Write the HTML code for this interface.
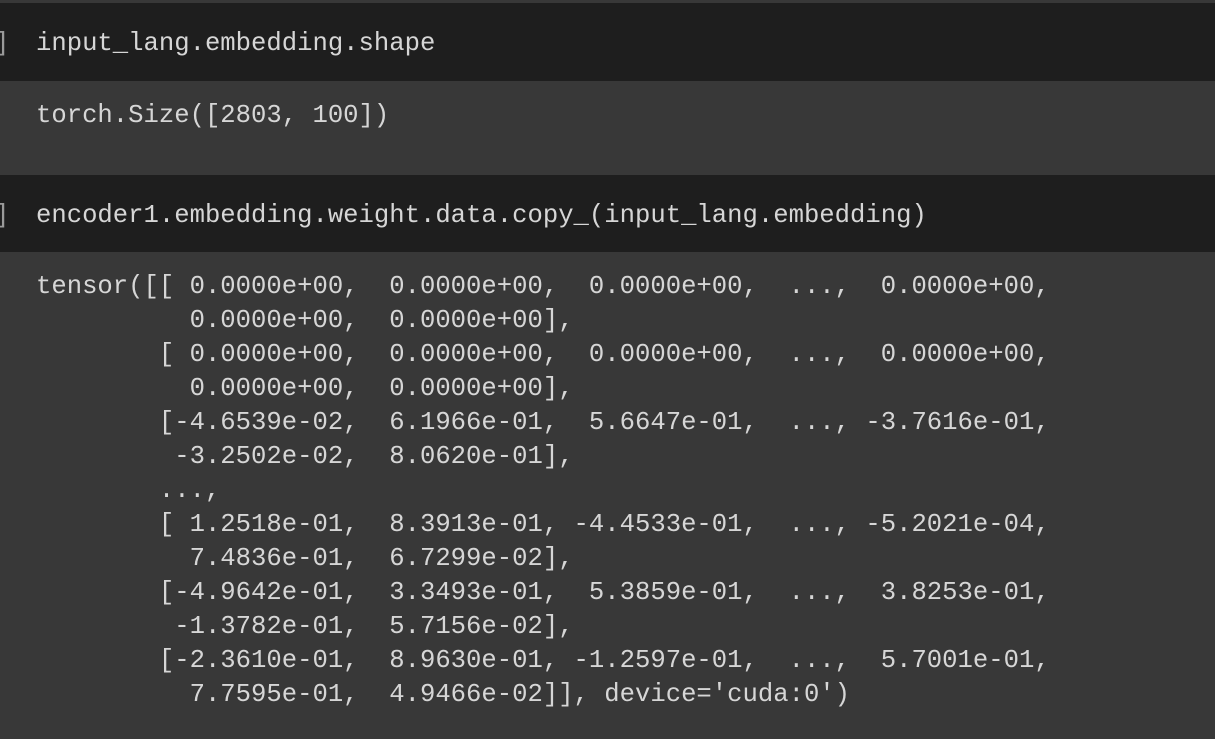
<!DOCTYPE html>
<html><head><style>
body{margin:0;width:1215px;height:739px;background:#383838;overflow:hidden;font-family:"Liberation Mono",monospace;font-size:25.6px;color:#d6d6d6;position:relative}
.band{position:absolute;left:0;width:1215px;background:#1e1e1e}
pre{margin:0;font:inherit;position:absolute;left:36px;line-height:34px;white-space:pre}
.br{position:absolute;color:#9a9a9a}
</style></head><body>
<div class="band" style="top:3px;height:78px"></div>
<div class="band" style="top:175px;height:77px"></div>
<pre style="top:27px">input_lang.embedding.shape</pre>
<pre class="br" style="top:27px;left:-6px">]</pre>
<pre style="top:99px">torch.Size([2803, 100])</pre>
<pre style="top:199px">encoder1.embedding.weight.data.copy_(input_lang.embedding)</pre>
<pre class="br" style="top:199px;left:-6px">]</pre>
<pre style="top:270px">tensor([[ 0.0000e+00,  0.0000e+00,  0.0000e+00,  ...,  0.0000e+00,
          0.0000e+00,  0.0000e+00],
        [ 0.0000e+00,  0.0000e+00,  0.0000e+00,  ...,  0.0000e+00,
          0.0000e+00,  0.0000e+00],
        [-4.6539e-02,  6.1966e-01,  5.6647e-01,  ..., -3.7616e-01,
         -3.2502e-02,  8.0620e-01],
        ...,
        [ 1.2518e-01,  8.3913e-01, -4.4533e-01,  ..., -5.2021e-04,
          7.4836e-01,  6.7299e-02],
        [-4.9642e-01,  3.3493e-01,  5.3859e-01,  ...,  3.8253e-01,
         -1.3782e-01,  5.7156e-02],
        [-2.3610e-01,  8.9630e-01, -1.2597e-01,  ...,  5.7001e-01,
          7.7595e-01,  4.9466e-02]], device='cuda:0')</pre>
</body></html>
